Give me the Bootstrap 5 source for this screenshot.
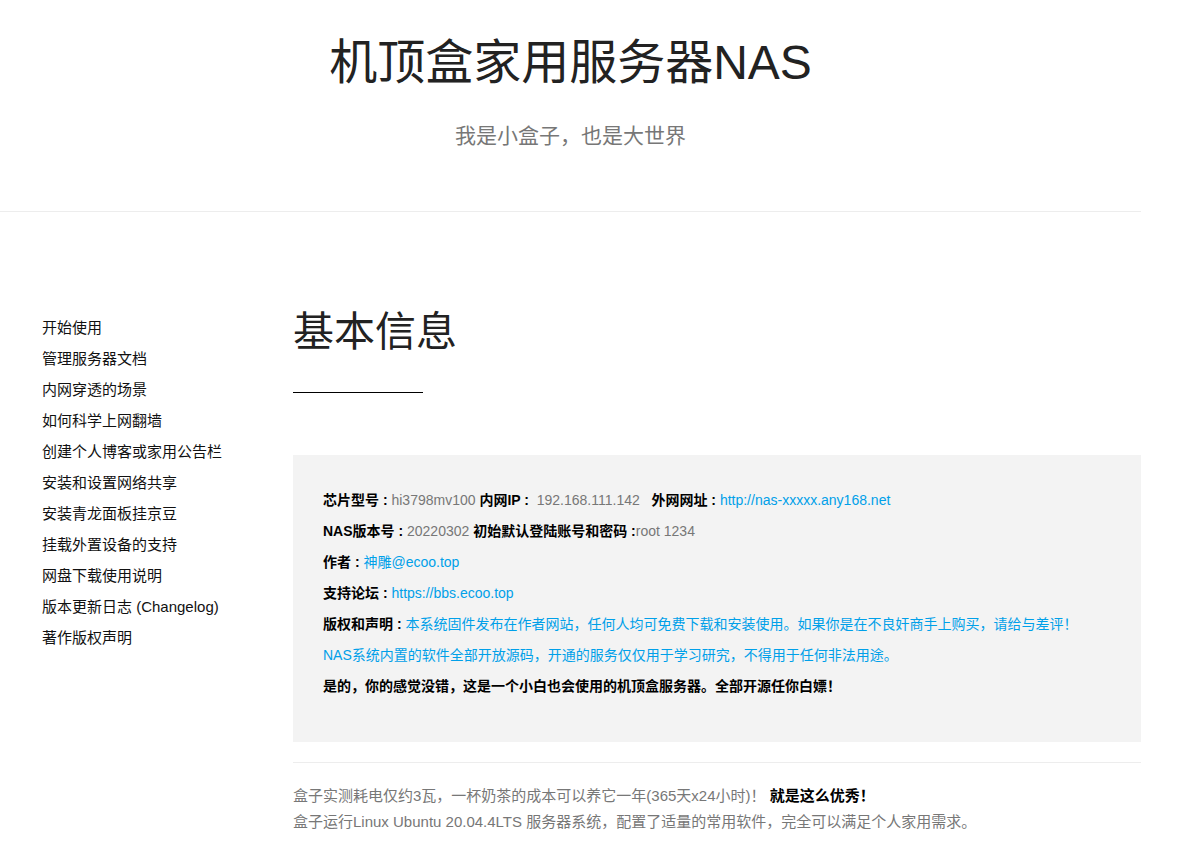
<!DOCTYPE html>
<html lang="zh-CN">
<head>
<meta charset="utf-8">
<meta name="viewport" content="width=device-width, initial-scale=1">
<title>机顶盒家用服务器NAS</title>
<link href="https://cdn.jsdelivr.net/npm/bootstrap@5.3.0/dist/css/bootstrap.min.css" rel="stylesheet">
<style>
body{font-family:"Liberation Sans","Noto Sans CJK SC",sans-serif;font-size:15px;line-height:26px;color:#777;background:#fff}
a{color:#00a0e9;text-decoration:none}
strong{color:#000}
.page-wrap{padding-right:48px}
.site-head{border-bottom:1px solid #ededed;padding:27px 0 60px}
.site-head h1{font-size:48px;line-height:72px;color:#222;margin-bottom:21px}
.site-head p{font-size:21px;line-height:31px}
.doc-body{padding:89px 0 0 42px}
.doc-nav{width:251px;padding-top:11px}
.doc-nav a{color:#111;line-height:31px;font-size:15px}
.doc-main h2{font-size:41px;line-height:62px;color:#222}
.title-rule{width:130px;border-top:1px solid #000;margin:29px 0 62px}
.info-box{background:#f3f3f3;padding:30px 30px 40px;font-size:14px;line-height:31px}
.doc-main hr{margin:20px 0;border-color:#ededed;opacity:1}
</style>
</head>
<body>
<div class="page-wrap">
<header class="site-head text-center">
<h1 class="fw-normal">机顶盒家用服务器NAS</h1>
<p class="mb-0">我是小盒子，也是大世界</p>
</header>
<div class="doc-body d-flex">
<nav class="doc-nav nav flex-column flex-nowrap flex-shrink-0" aria-label="文档">
<a href="#start">开始使用</a>
<a href="#manage">管理服务器文档</a>
<a href="#tunnel">内网穿透的场景</a>
<a href="#network">如何科学上网翻墙</a>
<a href="#blog">创建个人博客或家用公告栏</a>
<a href="#share">安装和设置网络共享</a>
<a href="#panel">安装青龙面板挂京豆</a>
<a href="#mount">挂载外置设备的支持</a>
<a href="#download">网盘下载使用说明</a>
<a href="#changelog">版本更新日志 (Changelog)</a>
<a href="#copyright">著作版权声明</a>
</nav>
<main class="doc-main flex-grow-1">
<h2 class="fw-normal mb-0">基本信息</h2>
<div class="title-rule"></div>
<section class="info-box">
<div><strong>芯片型号 :</strong> hi3798mv100 <strong>内网IP :</strong> &nbsp;192.168.111.142 &nbsp; <strong>外网网址 :</strong> <a href="#site">http://nas-xxxxx.any168.net</a></div>
<div><strong>NAS版本号 :</strong> 20220302 <strong>初始默认登陆账号和密码 :</strong>root 1234</div>
<div><strong>作者 :</strong> <a href="#author">神雕@ecoo.top</a></div>
<div><strong>支持论坛 :</strong> <a href="#forum">https://bbs.ecoo.top</a></div>
<div><strong>版权和声明 :</strong> <a href="#notice">本系统固件发布在作者网站，任何人均可免费下载和安装使用。如果你是在不良奸商手上购买，请给与差评！</a></div>
<div><a href="#notice">NAS系统内置的软件全部开放源码，开通的服务仅仅用于学习研究，不得用于任何非法用途。</a></div>
<div><strong>是的，你的感觉没错，这是一个小白也会使用的机顶盒服务器。全部开源任你白嫖！</strong></div>
</section>
<hr>
<p class="mb-0">盒子实测耗电仅约3瓦，一杯奶茶的成本可以养它一年(365天x24小时)！ <strong>就是这么优秀！</strong><br>盒子运行Linux Ubuntu 20.04.4LTS 服务器系统，配置了适量的常用软件，完全可以满足个人家用需求。</p>
</main>
</div>
</div>
<script src="https://cdn.jsdelivr.net/npm/bootstrap@5.3.0/dist/js/bootstrap.bundle.min.js"></script>
</body>
</html>
